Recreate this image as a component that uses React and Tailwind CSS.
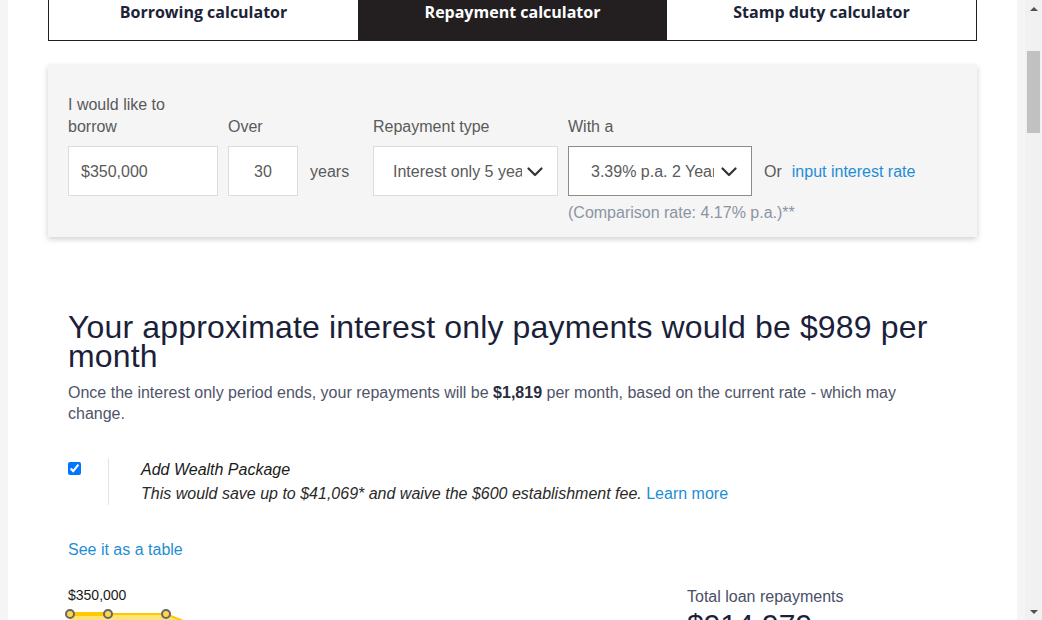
function Chevron() {
  return (
    <svg width="16" height="10" viewBox="0 0 16 10" className="shrink-0">
      <path d="M1.5 1.5 L8 8 L14.5 1.5" fill="none" stroke="#333" strokeWidth="2.2" strokeLinecap="round" strokeLinejoin="round" />
    </svg>
  );
}

export default function App() {
  return (
    <div className="flex h-[620px] w-[1042px] overflow-hidden bg-white">
      <div className="w-[8px] shrink-0 bg-[#f5f5f5]" />
      <main className="flex-1 px-10 font-['Liberation_Sans',Arial,sans-serif]">
        {/* Tabs */}
        <div className="grid h-[41px] grid-cols-3 border-x border-b border-[#231f20] font-['Open_Sans',sans-serif] text-[16px] font-bold leading-[24px]">
          <div className="flex justify-center text-[#1b2437]">Borrowing calculator</div>
          <div className="flex justify-center bg-[#231f20] text-white">Repayment calculator</div>
          <div className="flex justify-center text-[#1b2437]">Stamp duty calculator</div>
        </div>

        {/* Form panel */}
        <div className="mt-[24px] flex h-[172px] items-start bg-[#f5f5f5] px-5 pt-[29px] text-[16px] leading-[22px] text-[#5a5a5a] shadow-[0_2px_6px_rgba(0,0,0,0.2)]">
          <div className="flex w-[150px] flex-col">
            <div className="flex h-[44px] items-end">
              <span>I would like to<br />borrow</span>
            </div>
            <div className="mt-[8px] flex h-[50px] items-center border border-[#dcdcdc] bg-white px-[12px] pt-[1px]">$350,000</div>
          </div>
          <div className="ml-[10px] flex w-[70px] flex-col">
            <div className="flex h-[44px] items-end">Over</div>
            <div className="mt-[8px] flex h-[50px] items-center justify-center border border-[#dcdcdc] bg-white pt-[1px]">30</div>
          </div>
          <div className="ml-[12px] flex w-[63px] flex-col">
            <div className="h-[44px]" />
            <div className="mt-[8px] flex h-[50px] items-center pt-[1px]">years</div>
          </div>
          <div className="flex w-[185px] flex-col">
            <div className="flex h-[44px] items-end">Repayment type</div>
            <div className="mt-[8px] flex h-[50px] items-center border border-[#dcdcdc] bg-white pl-[19px] pr-[14px] pt-[1px]">
              <span className="w-[129px] overflow-hidden whitespace-nowrap">Interest only 5 years</span>
              <span className="ml-auto"><Chevron /></span>
            </div>
          </div>
          <div className="ml-[10px] flex w-[184px] flex-col">
            <div className="flex h-[44px] items-end">With a</div>
            <div className="mt-[8px] flex h-[50px] items-center border border-[#8c8c8c] bg-white pl-[22px] pr-[14px] pt-[1px]">
              <span className="w-[123px] overflow-hidden whitespace-nowrap">3.39% p.a. 2 Year Fixed</span>
              <span className="ml-auto"><Chevron /></span>
            </div>
            <div className="mt-[6px] whitespace-nowrap leading-[21px] text-[#8b94a3]">(Comparison rate: 4.17% p.a.)**</div>
          </div>
          <div className="ml-[12px] flex flex-col">
            <div className="h-[44px]" />
            <div className="mt-[8px] flex h-[50px] items-center whitespace-nowrap pt-[1px]">
              <span>Or</span>
              <span className="ml-[10px] text-[#1f8dd6]">input interest rate</span>
            </div>
          </div>
        </div>

        {/* Result heading */}
        <h1 className="mt-[76px] px-5 text-[32px] font-normal leading-[29px] tracking-[0.15px] text-[#1c1f3a]">
          <span className="whitespace-nowrap">Your approximate interest only payments would be $989 per</span>
          <br />month
        </h1>
        <p className="mt-[11px] px-5 text-[16px] leading-[21px] text-[#505468]">
          Once the interest only period ends, your repayments will be <b className="text-[#2a2d3e]">$1,819</b> per month, based on the current rate - which may
          <br />change.
        </p>

        {/* Wealth package */}
        <div className="mt-[34px] flex px-5">
          <div className="w-[40px] pt-[4px]">
            <input type="checkbox" defaultChecked className="m-0 block h-[13px] w-[13px]" />
          </div>
          <div className="h-[47px] border-l border-[#e3e3e3]" />
          <div className="pl-[32px] italic leading-[24px] text-[#1a1a1a]">
            <div className="text-[16px]">Add Wealth Package</div>
            <div className="text-[16px] text-[#2a2a2a]">
              This would save up to $41,069* and waive the $600 establishment fee. <span className="not-italic text-[#1f8dd6]">Learn more</span>
            </div>
          </div>
        </div>

        <div className="mt-[33px] px-5 text-[16px] leading-[21px] text-[#1f8dd6]">See it as a table</div>

        {/* Chart + totals */}
        <div className="mt-[27px] flex px-5">
          <div className="w-[619px]">
            <div className="text-[14px] leading-[16px] text-[#1a1a1a]">$350,000</div>
            <svg width="200" height="20" className="block overflow-visible">
              <path d="M2 11 L40 11 L98 11 L130 24 L2 24 Z" fill="#ffe27a" />
              <path d="M2 11 L40 11" stroke="#ffc800" strokeWidth="4" />
              <path d="M40 11 L98 11 L130 24" stroke="#ffc800" strokeWidth="2" fill="none" />
              <circle cx="2" cy="11" r="4" fill="#ffd54a" stroke="#666" strokeWidth="2" />
              <circle cx="40" cy="11" r="4" fill="#ffd54a" stroke="#666" strokeWidth="2" />
              <circle cx="98" cy="11" r="4" fill="#ffd54a" stroke="#666" strokeWidth="2" />
            </svg>
          </div>
          <div className="flex flex-col">
            <div className="text-[16px] leading-[20px] text-[#4a5068]">Total loan repayments</div>
            <div className="text-[30px] leading-[36px] text-[#1c1f3a]">$914,979</div>
          </div>
        </div>
      </main>
      <div className="w-[8px] shrink-0 bg-[#f5f5f5]" />
      <div className="flex w-[17px] shrink-0 flex-col bg-[#f1f1f1]">
        <div className="flex h-[17px] items-center justify-center">
          <div className="h-0 w-0 border-x-[4px] border-b-[4px] border-x-transparent border-b-[#505050]" />
        </div>
        <div className="mx-[2px] mt-[34px] h-[82px] bg-[#c1c1c1]" />
        <div className="flex-1" />
        <div className="flex h-[17px] items-center justify-center">
          <div className="h-0 w-0 border-x-[4px] border-t-[4px] border-x-transparent border-t-[#505050]" />
        </div>
      </div>
    </div>
  );
}
